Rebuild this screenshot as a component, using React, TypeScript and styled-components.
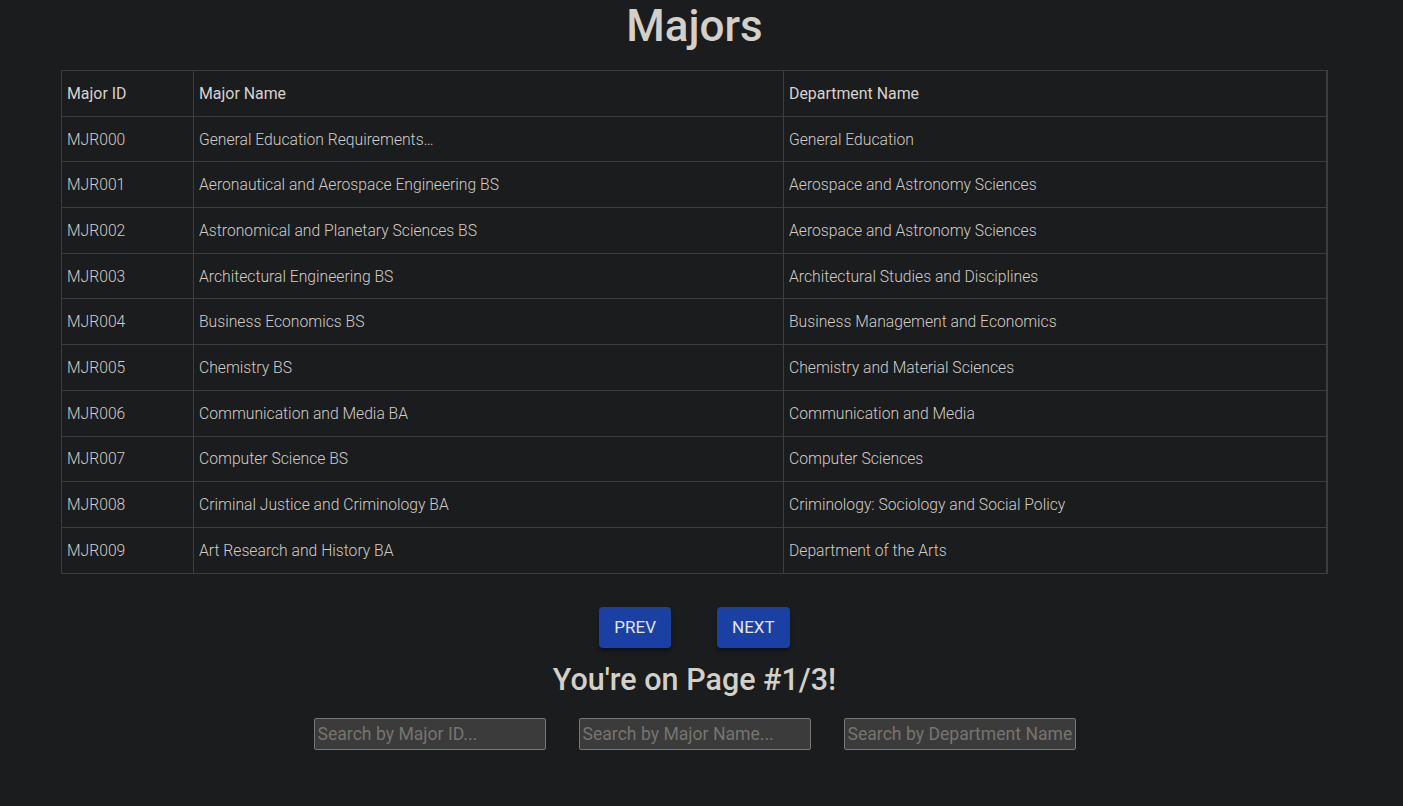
import React, { FC } from 'react';
import styled, { createGlobalStyle } from 'styled-components';

const GlobalStyle = createGlobalStyle`
  html, body {
    margin: 0;
    padding: 0;
    background: #1b1c1e;
    color: #d3cfc9;
    font-family: Roboto, "Liberation Sans", sans-serif;
  }
`;

const Page = styled.div`
  width: 1267px;
  margin-left: 61px;
  display: flex;
  flex-direction: column;
  align-items: center;
`;

const Title = styled.h1`
  margin: 0 0 18px;
  font-size: 44px;
  font-weight: 500;
  line-height: normal;
  color: #d3cfc9;
`;

const Table = styled.table`
  width: 100%;
  border-collapse: collapse;
  table-layout: fixed;
  border: 1px solid #3c3d40;
  border-right-width: 2px;
`;

const Row = styled.tr`
  height: 45.7px;
`;

const HeadCell = styled.th`
  padding: 0 5px;
  border: 1px solid #3c3d40;
  text-align: left;
  font-size: 15.9px;
  font-weight: 400;
  color: #d6d2cd;
`;

const Cell = styled.td`
  padding: 0 5px;
  border: 1px solid #3c3d40;
  font-size: 15.7px;
  font-weight: 300;
  color: #d1ccc6;
  white-space: nowrap;
  overflow: hidden;
  text-overflow: ellipsis;
`;

const Pager = styled.div`
  margin-top: 33px;
  display: flex;
  gap: 46px;
`;

const PageButton = styled.button`
  height: 41px;
  padding: 0 15px;
  border: none;
  border-radius: 4px;
  background: #1a40a3;
  color: #e6e4e1;
  font-family: Roboto, "Liberation Sans", sans-serif;
  font-size: 17px;
  font-weight: 400;
  text-transform: uppercase;
  box-shadow: 0 3px 3px -2px rgba(0, 0, 0, 0.4), 0 3px 4px rgba(0, 0, 0, 0.28);
  cursor: pointer;
`;

const PageInfo = styled.h2`
  margin: 14px 0 21px;
  font-size: 30.5px;
  font-weight: 500;
  line-height: normal;
  color: #d3cfc9;
`;

const SearchBar = styled.div`
  display: flex;
  gap: 33px;
`;

const SearchInput = styled.input`
  box-sizing: border-box;
  width: 232px;
  height: 32px;
  padding: 0 3px;
  border: 1px solid #77777a;
  border-radius: 2px;
  background: #3b3b3b;
  color: #d3cfc9;
  font-family: Roboto, "Liberation Sans", sans-serif;
  font-size: 17.6px;

  &::placeholder {
    color: #77746f;
  }
`;

type Major = { id: string; name: string; department: string };

const MAJORS: Major[] = [
  { id: 'MJR000', name: 'General Education Requirements…', department: 'General Education' },
  { id: 'MJR001', name: 'Aeronautical and Aerospace Engineering BS', department: 'Aerospace and Astronomy Sciences' },
  { id: 'MJR002', name: 'Astronomical and Planetary Sciences BS', department: 'Aerospace and Astronomy Sciences' },
  { id: 'MJR003', name: 'Architectural Engineering BS', department: 'Architectural Studies and Disciplines' },
  { id: 'MJR004', name: 'Business Economics BS', department: 'Business Management and Economics' },
  { id: 'MJR005', name: 'Chemistry BS', department: 'Chemistry and Material Sciences' },
  { id: 'MJR006', name: 'Communication and Media BA', department: 'Communication and Media' },
  { id: 'MJR007', name: 'Computer Science BS', department: 'Computer Sciences' },
  { id: 'MJR008', name: 'Criminal Justice and Criminology BA', department: 'Criminology: Sociology and Social Policy' },
  { id: 'MJR009', name: 'Art Research and History BA', department: 'Department of the Arts' },
];

const MajorsTable: FC<{ majors: Major[] }> = ({ majors }) => (
  <Table>
    <colgroup>
      <col style={{ width: 132 }} />
      <col style={{ width: 590 }} />
      <col />
    </colgroup>
    <thead>
      <Row>
        <HeadCell>Major ID</HeadCell>
        <HeadCell>Major Name</HeadCell>
        <HeadCell>Department Name</HeadCell>
      </Row>
    </thead>
    <tbody>
      {majors.map((m) => (
        <Row key={m.id}>
          <Cell>{m.id}</Cell>
          <Cell>{m.name}</Cell>
          <Cell>{m.department}</Cell>
        </Row>
      ))}
    </tbody>
  </Table>
);

const App: FC = () => {
  const page = 1;
  const pages = 3;
  return (
    <>
      <GlobalStyle />
      <Page>
        <Title>Majors</Title>
        <MajorsTable majors={MAJORS} />
        <Pager>
          <PageButton>Prev</PageButton>
          <PageButton>Next</PageButton>
        </Pager>
        <PageInfo>
          You're on Page #{page}/{pages}!
        </PageInfo>
        <SearchBar>
          <SearchInput placeholder="Search by Major ID..." />
          <SearchInput placeholder="Search by Major Name..." />
          <SearchInput placeholder="Search by Department Name" />
        </SearchBar>
      </Page>
    </>
  );
};

export default App;
